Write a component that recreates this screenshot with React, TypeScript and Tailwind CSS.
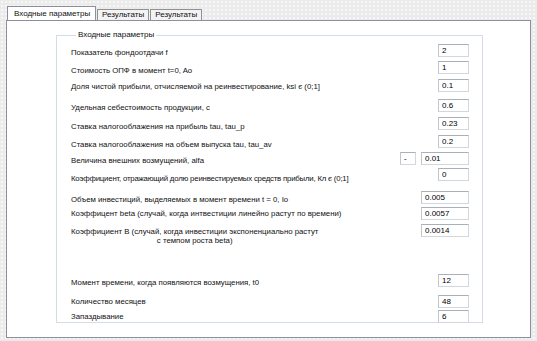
import React from 'react';

type Row = {
  label: React.ReactNode;
  value: string;
  rowClass: string;
  labelClass: string;
  wide?: boolean;
  minus?: boolean;
};

const rows: Row[] = [
  { label: 'Показатель фондоотдачи f', value: '2', rowClass: 'mt-[4px]', labelClass: 'mt-[4px]' },
  { label: 'Стоимость ОПФ в момент t=0, Ao', value: '1', rowClass: 'mt-[3px]', labelClass: 'mt-[5px]' },
  { label: 'Доля чистой прибыли, отчисляемой на реинвестирование, ksi є (0;1]', value: '0.1', rowClass: 'mt-[3px]', labelClass: 'mt-[3px]' },
  { label: 'Удельная себестоимость продукции, c', value: '0.6', rowClass: 'mt-[7px]', labelClass: 'mt-[4px]' },
  { label: 'Ставка налогооблажения на прибыль tau, tau_p', value: '0.23', rowClass: 'mt-[4px]', labelClass: 'mt-[5px]' },
  { label: 'Ставка налогооблажения на объем выпуска tau, tau_av', value: '0.2', rowClass: 'mt-[3px]', labelClass: 'mt-[5px]' },
  { label: 'Величина внешних возмущений, alfa', value: '0.01', rowClass: 'mt-[2px]', labelClass: 'mt-[4px]', wide: true, minus: true },
  { label: 'Коэффициент, отражающий долю реинвестируемых средств прибыли, Кл є (0;1]', value: '0', rowClass: 'mt-[2px]', labelClass: 'mt-[6px] tracking-[-0.2px]' },
  { label: 'Объем инвестиций, выделяемых в момент времени t = 0, Io', value: '0.005', rowClass: 'mt-[7px]', labelClass: 'mt-[4px]', wide: true },
  { label: 'Коэффицент beta (случай, когда интвестиции линейно растут по времени)', value: '0.0057', rowClass: 'mt-[2px]', labelClass: 'mt-[2px]', wide: true },
  {
    label: (
      <span className="block text-center leading-[8.5px]">
        Коэффициент B (случай, когда инвестиции экспоненциально растут
        <br />
        с темпом роста beta)
      </span>
    ),
    value: '0.0014',
    rowClass: 'mt-[4px]',
    labelClass: 'mt-[4px]',
    wide: true,
  },
  { label: 'Момент времени, когда появляются возмущения, t0', value: '12', rowClass: 'mt-[29px]', labelClass: 'mt-[4px]' },
  { label: 'Количество месяцев', value: '48', rowClass: 'mt-[7px]', labelClass: 'mt-[2px]' },
  { label: 'Запаздывание', value: '6', rowClass: 'mt-[2px]', labelClass: 'mt-[2px]' },
];

const inputBox =
  'h-[13px] bg-white border border-[#d2d7dd] border-t-[#a9b0b8] border-l-[#c0c6cd] px-[3px] text-[8px] leading-[11px] text-black';

function Tab({ label, active }: { label: string; active?: boolean }) {
  if (active) {
    return (
      <div className="h-[14px] w-[89px] -mb-px relative z-10 bg-white border border-b-0 border-[#8e8f9e] flex items-center pl-[6px] text-[8px] text-[#111]">
        {label}
      </div>
    );
  }
  return (
    <div className="h-[11px] mt-[3px] px-[4px] ml-px bg-[#f3f3f3] border border-b-0 border-[#919191] flex items-center text-[8px] text-[#111]">
      {label}
    </div>
  );
}

export default function App() {
  return (
    <div
      className="w-[537px] h-[341px] overflow-hidden bg-[#ebebeb] bg-[radial-gradient(#f7f7f7_0.8px,transparent_0.9px)] bg-[length:4px_4px] pt-[6px] pl-[6px]"
      style={{ fontFamily: '"Liberation Sans", Arial, sans-serif' }}
    >
      {/* tab strip */}
      <div className="flex items-start h-[14px] pl-px">
        <Tab label="Входные параметры" active />
        <Tab label="Результаты" />
        <Tab label="Результаты" />
      </div>

      {/* tab page */}
      <div className="w-[525px] h-[318px] bg-white border border-[#8e8f9e] pt-[9px] pl-[49px]">
        <fieldset className="w-[427px] h-[293px] border border-[#d3dde3] pl-[14px] pr-[13px]">
          <legend className="ml-[5px] px-[2px] text-[8px] leading-[10px] text-[#111]">
            Входные параметры
          </legend>
          {rows.map((r, i) => (
            <div key={i} className={`flex items-start justify-between ${r.rowClass}`}>
              <div className={`text-[7.8px] leading-[10px] text-[#111] whitespace-nowrap ${r.labelClass}`}>
                {r.label}
              </div>
              <div className="flex items-start gap-[5px]">
                {r.minus && <div className={`${inputBox} w-[16px]`}>-</div>}
                <div className={`${inputBox} ${r.wide ? 'w-[48px]' : 'w-[31px]'}`}>{r.value}</div>
              </div>
            </div>
          ))}
        </fieldset>
      </div>
    </div>
  );
}
